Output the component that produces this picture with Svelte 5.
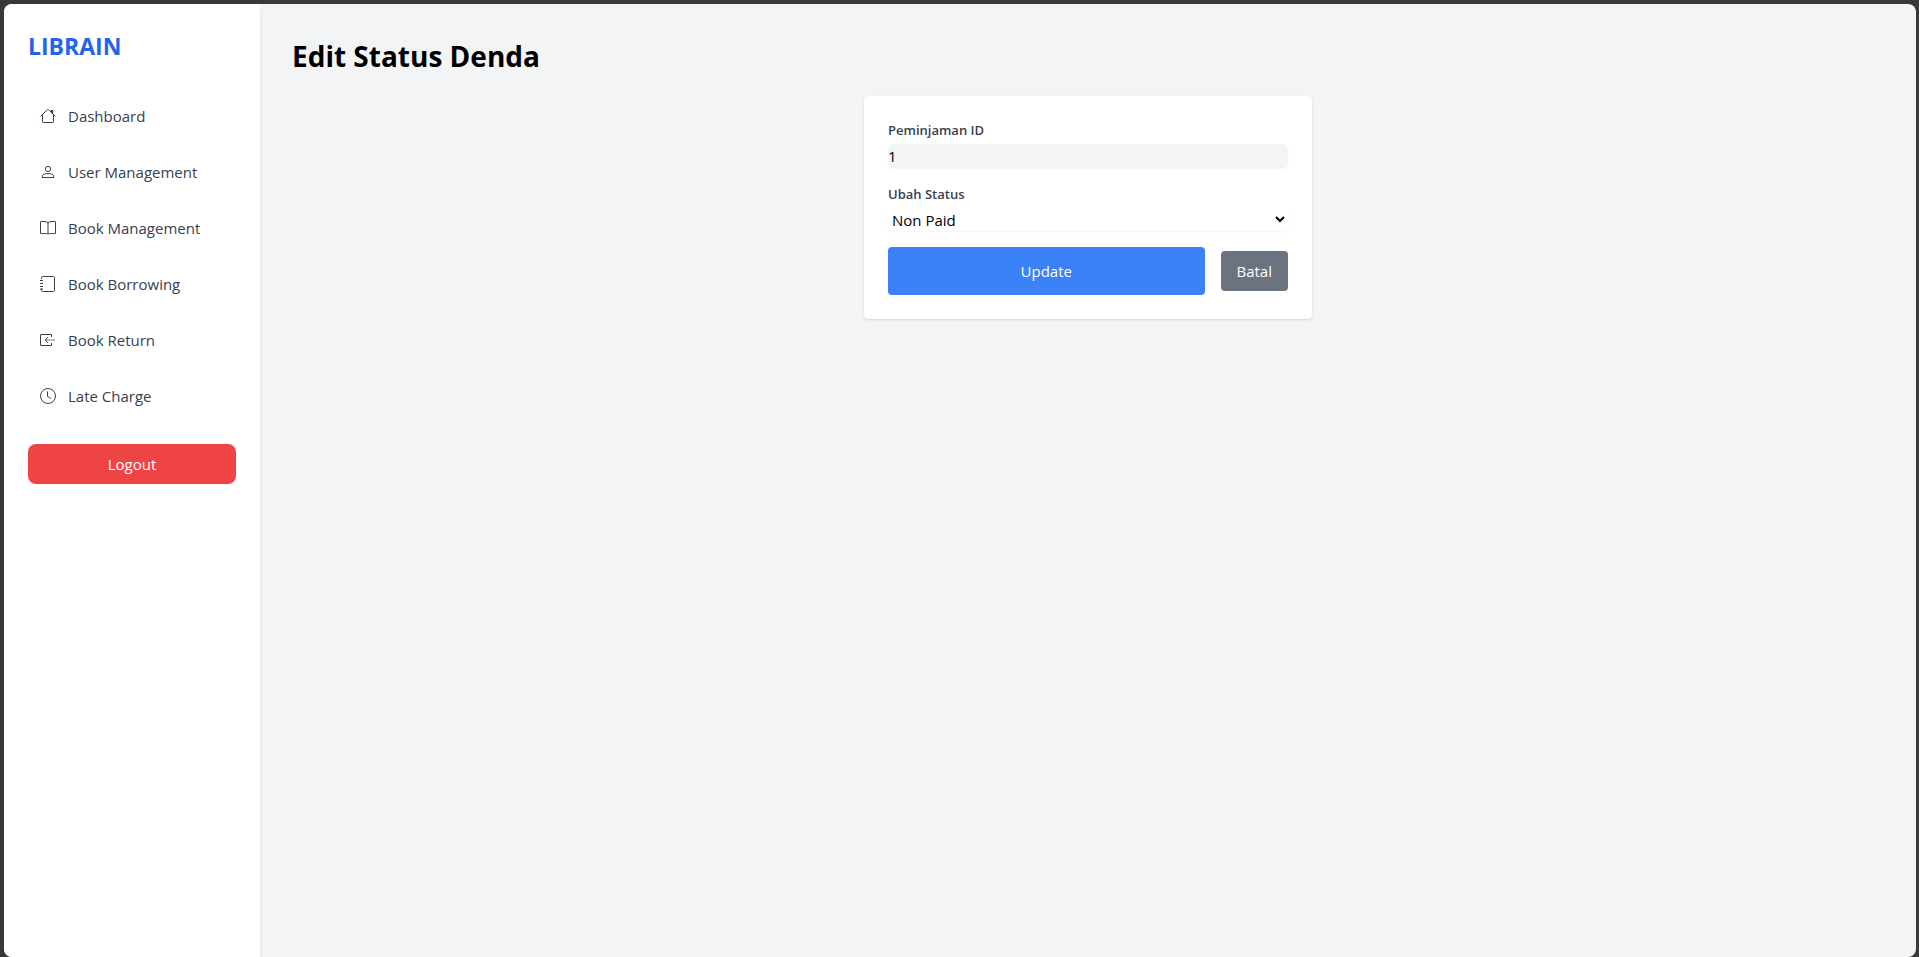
<script>
  const links = [
    { label: 'Dashboard', icon: 'home' },
    { label: 'User Management', icon: 'user' },
    { label: 'Book Management', icon: 'book' },
    { label: 'Book Borrowing', icon: 'notebook' },
    { label: 'Book Return', icon: 'return' },
    { label: 'Late Charge', icon: 'clock' }
  ];
  let status = $state('Non Paid');
</script>

<div class="window">
  <aside>
    <a class="brand" href="#home">LIBRAIN</a>
    <nav>
      {#each links as link}
        <a class="item" href="#{link.icon}">
          <svg viewBox="0 0 16 16" aria-hidden="true">
            {#if link.icon === 'home'}
              <path d="M.6 8.400 7.400 1.700q.6-.5 1.200 0l6.800 6.700M2.500 7v6.800q0 .7.7.7h9.600q.7 0 .7-.7V7" />
              <path class="solid" d="M10.800 2h2.400v4.600l-2.400-2.400z" />
            {:else if link.icon === 'user'}
              <circle cx="8" cy="5" r="2.600" />
              <path d="M2.200 13.500q-.2-3.700 4-3.800h3.600q4.200.1 4 3.800z" />
            {:else if link.icon === 'book'}
              <path d="M8 2.500Q6.500 1.500 4 1.500H1q-.5 0-.5.5v11.500h4.200q2 0 3.300.5 1.300-.5 3.300-.5h4.200V2q0-.5-.5-.5h-3Q9.500 1.500 8 2.500V14" />
            {:else if link.icon === 'notebook'}
              <path d="M1.500 3V1.500q0-1 1-1h11q1 0 1 1v13q0 1-1 1h-11q-1 0-1-1V13M0 4.500h3M0 7.500h3M0 10.500h3M0 13h3" />
            {:else if link.icon === 'return'}
              <path d="M11.500 5V2.800q0-.3-.3-.3H1q-.5 0-.5.5v10q0 .5.5.5h10.200q.3 0 .3-.3V11" />
              <path d="M8.200 5 5.200 8l3 3" />
              <path class="light" d="M5.500 8H15" />
            {:else}
              <circle cx="8" cy="8" r="7.500" />
              <path d="M7.500 3.500v5l3.500 2" />
            {/if}
          </svg>
          <span>{link.label}</span>
        </a>
      {/each}
    </nav>
    <button class="logout" type="button">Logout</button>
  </aside>

  <main>
    <h1>Edit Status Denda</h1>
    <form class="card" onsubmit={(e) => e.preventDefault()}>
      <div class="field">
        <label for="loan">Peminjaman ID</label>
        <input id="loan" type="text" value="1" readonly />
      </div>
      <div class="field">
        <label for="status">Ubah Status</label>
        <select id="status" bind:value={status}>
          <option>Non Paid</option>
          <option>Paid</option>
        </select>
      </div>
      <div class="actions">
        <button class="update" type="submit">Update</button>
        <a class="cancel" href="#clock">Batal</a>
      </div>
    </form>
  </main>
</div>

<style>
  :global(body) {
    margin: 0;
    background: #3a3938;
    font-family: 'Segoe UI', 'Open Sans', 'Noto Sans', sans-serif;
    font-size: 15px;
    line-height: 24px;
  }
  * {
    box-sizing: border-box;
  }
  a {
    color: inherit;
    text-decoration: none;
  }
  button,
  input,
  select {
    font: inherit;
    border: 0;
    margin: 0;
  }
  .window {
    display: flex;
    height: calc(100vh - 4px);
    margin: 4px 3px 0 4px;
    overflow: hidden;
    border-radius: 8px;
    background: #f3f4f6;
  }
  :global(#app) {
    display: flow-root;
  }
  aside {
    flex: none;
    width: 256px;
    padding: 24px;
    background: #fff;
    box-shadow: 0 4px 6px -1px rgb(0 0 0 / 0.1), 0 2px 4px -2px rgb(0 0 0 / 0.1);
  }
  .brand {
    display: block;
    padding-top: 2px;
    margin-bottom: 30px;
    color: #2563eb;
    font-size: 23px;
    font-weight: 700;
    line-height: 32px;
  }
  nav {
    display: grid;
    gap: 8px;
  }
  .item {
    display: flex;
    align-items: center;
    gap: 12px;
    padding: 12px;
    border-radius: 8px;
    color: #374151;
  }
  svg {
    width: 16px;
    height: 16px;
    fill: none;
    stroke: currentColor;
    stroke-width: 1;
    stroke-linejoin: round;
  }
  .solid {
    fill: currentColor;
    stroke: none;
  }
  .light {
    opacity: 0.7;
  }
  .logout {
    width: 100%;
    margin-top: 24px;
    padding: 8px 16px;
    border-radius: 8px;
    background: #ef4444;
    color: #fff;
  }
  main {
    flex: 1;
    padding: 32px;
  }
  h1 {
    margin: 0 0 22px;
    padding-top: 2px;
    color: #000;
    font-size: 28px;
    font-weight: 700;
    line-height: 36px;
  }
  .card {
    max-width: 448px;
    margin: 0 auto;
    padding: 24px;
    border-radius: 4px;
    background: #fff;
    box-shadow: 0 1px 3px rgb(0 0 0 / 0.1), 0 1px 2px -1px rgb(0 0 0 / 0.1);
  }
  .field {
    margin-bottom: 16px;
  }
  label {
    display: block;
    margin-bottom: 4px;
    color: #374151;
    font-size: 13px;
    font-weight: 600;
    line-height: 20px;
  }
  input,
  select {
    display: block;
    width: 100%;
    height: 24px;
    padding: 0;
    border-radius: 6px;
    color: #000;
    box-shadow: 0 1px 2px rgb(0 0 0 / 0.05);
  }
  input {
    background: #f3f4f6;
  }
  select {
    height: 23px;
    background: #fff;
  }
  .actions {
    display: flex;
    align-items: center;
    gap: 16px;
  }
  .update,
  .cancel {
    border-radius: 4px;
    color: #fff;
  }
  .update {
    flex: 1;
    padding: 12px 16px;
    background: #3b82f6;
  }
  .cancel {
    padding: 8px 16px;
    background: #6b7280;
  }
</style>
